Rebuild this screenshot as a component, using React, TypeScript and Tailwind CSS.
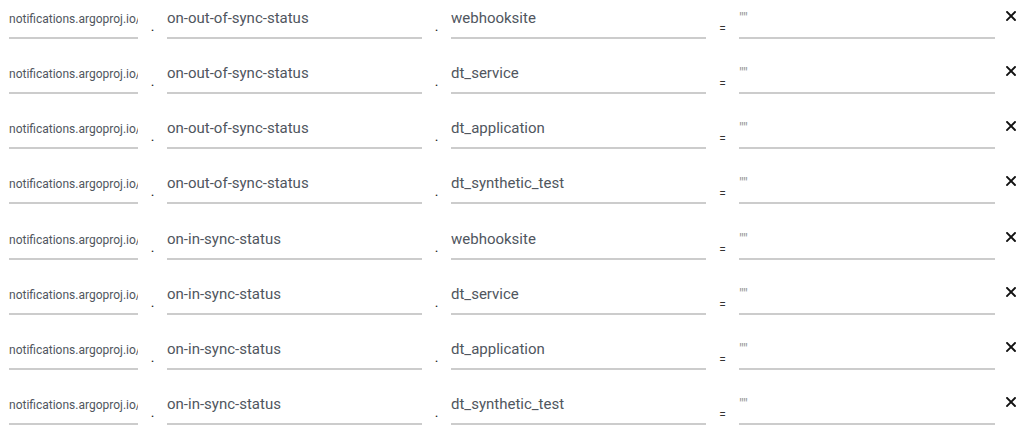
const rows = [
  ["on-out-of-sync-status", "webhooksite"],
  ["on-out-of-sync-status", "dt_service"],
  ["on-out-of-sync-status", "dt_application"],
  ["on-out-of-sync-status", "dt_synthetic_test"],
  ["on-in-sync-status", "webhooksite"],
  ["on-in-sync-status", "dt_service"],
  ["on-in-sync-status", "dt_application"],
  ["on-in-sync-status", "dt_synthetic_test"],
];

const Dot = () => (
  <div className="w-[29px] shrink-0 h-[38px] flex items-end justify-center pb-[5px] text-[14px] leading-none text-[#222]">.</div>
);

const CloseIcon = () => (
  <svg width="10" height="10" viewBox="0 0 10 10" className="block">
    <path d="M1 1 L9 9 M9 1 L1 9" stroke="#111" strokeWidth="1.9" strokeLinecap="square" />
  </svg>
);

const Field = ({ value, w, small, faint }: { value: string; w: string; small?: boolean; faint?: boolean }) => (
  <div
    className={`${w} shrink-0 h-[39px] border-b-2 border-[#cccccc] overflow-hidden whitespace-nowrap ${
      small ? "text-[12px] pt-[13px]" : "text-[15px] pt-[11px]"
    } leading-none ${faint ? "text-[#999]" : "text-[#50565e]"}`}
  >
    {value}
  </div>
);

export default function App() {
  return (
    <div className="w-[1031px] h-[430px] overflow-hidden bg-white" style={{ fontFamily: "Roboto, 'Liberation Sans', sans-serif" }}>
      {rows.map(([trigger, service], i) => (
        <div key={i} className="h-[55.15px] flex items-start pl-[9px]">
          <Field value="notifications.argoproj.io/" w="w-[129px]" small />
          <Dot />
          <Field value={trigger} w="w-[255px]" />
          <Dot />
          <Field value={service} w="w-[255px]" />
          <div className="w-[33px] shrink-0 h-[38px] flex items-end justify-center pb-[3px] text-[12px] leading-none text-[#333]">=</div>
          <Field value={'""'} w="w-[256px]" faint />
          <div className="flex-1 flex justify-center pt-[11px] pr-[4px]">
            <CloseIcon />
          </div>
        </div>
      ))}
    </div>
  );
}
